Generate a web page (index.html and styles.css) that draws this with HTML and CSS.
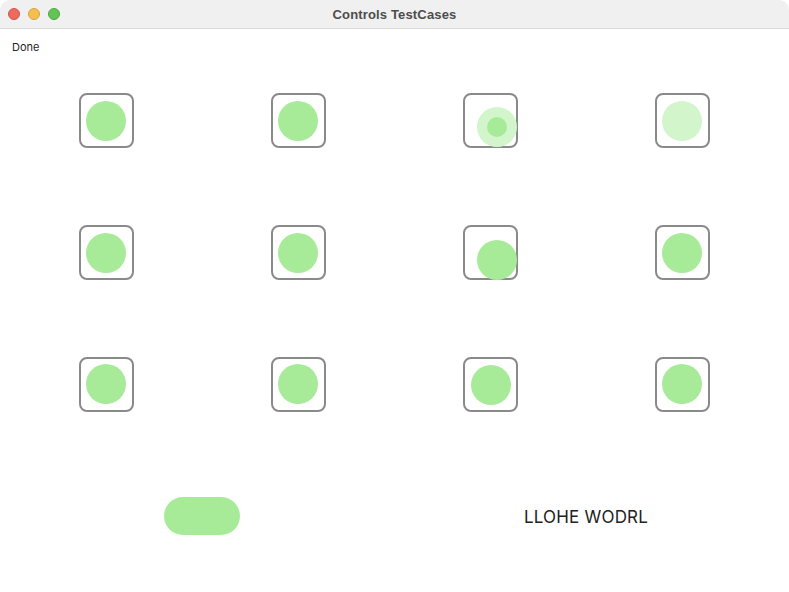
FILE: index.html
```html
<!DOCTYPE html>
<html>
<head>
<meta charset="utf-8">
<link rel="stylesheet" href="styles.css">
</head>
<body>
<div class="window">
  <div class="titlebar">
    <div class="lights">
      <span class="light red"></span>
      <span class="light yellow"></span>
      <span class="light green"></span>
    </div>
    <div class="title">Controls TestCases</div>
  </div>
  <div class="content">
    <div class="done">Done</div>
    <div class="grid">
      <div class="cell"><div class="box"><div class="dot"></div></div></div>
      <div class="cell"><div class="box"><div class="dot"></div></div></div>
      <div class="cell"><div class="box"><div class="dot faded shift-a"></div><div class="dot inner"></div></div></div>
      <div class="cell"><div class="box"><div class="dot faded"></div></div></div>

      <div class="cell"><div class="box"><div class="dot"></div></div></div>
      <div class="cell"><div class="box"><div class="dot"></div></div></div>
      <div class="cell"><div class="box"><div class="dot shift-b"></div></div></div>
      <div class="cell"><div class="box"><div class="dot"></div></div></div>

      <div class="cell"><div class="box"><div class="dot"></div></div></div>
      <div class="cell"><div class="box"><div class="dot"></div></div></div>
      <div class="cell"><div class="box"><div class="dot shift-c"></div></div></div>
      <div class="cell"><div class="box"><div class="dot"></div></div></div>

      <div class="cell wide"><div class="pill"></div></div>
      <div class="cell wide"><div class="label">LLOHE WODRL</div></div>
    </div>
  </div>
</div>
</body>
</html>
```
FILE: styles.css
```css
html, body {
  margin: 0;
  padding: 0;
  background: #ffffff;
}
body {
  width: 789px;
  height: 592px;
  overflow: hidden;
  font-family: "Inter", "Liberation Sans", sans-serif;
}
.window {
  width: 789px;
  height: 592px;
  background: #ffffff;
  border-radius: 10px 10px 0 0;
  overflow: hidden;
  display: flex;
  flex-direction: column;
}
.titlebar {
  height: 29px;
  flex: none;
  box-sizing: border-box;
  background: #f0f0f0;
  border-bottom: 1px solid #d9d9d9;
  position: relative;
  display: flex;
  align-items: center;
  justify-content: center;
}
.lights {
  position: absolute;
  left: 8px;
  top: 8px;
  display: flex;
  gap: 8px;
}
.light {
  width: 12px;
  height: 12px;
  border-radius: 50%;
  box-sizing: border-box;
}
.red { background: #ec6a5e; border: 0.5px solid #d5544a; }
.yellow { background: #f4bf4f; border: 0.5px solid #d6a243; }
.green { background: #61c554; border: 0.5px solid #4fa642; }
.title {
  font-family: "Liberation Sans", "Inter", sans-serif;
  font-weight: bold;
  font-size: 13px;
  color: #4c4c4c;
  letter-spacing: 0.15px;
}
.content {
  flex: 1;
  display: flex;
  flex-direction: column;
}
.done {
  height: 26px;
  box-sizing: border-box;
  padding: 12px 0 0 12px;
  font-size: 11px;
  line-height: 13px;
  color: #262626;
}
.grid {
  margin-left: 10px;
  width: 768px;
  display: grid;
  grid-template-columns: repeat(4, 192px);
  grid-template-rows: repeat(4, 131.7px);
}
.cell {
  display: flex;
  align-items: center;
  justify-content: center;
}
.cell.wide {
  grid-column: span 2;
}
.box {
  width: 55px;
  height: 55px;
  box-sizing: border-box;
  border: 2px solid #8a8a8a;
  border-radius: 8px;
  position: relative;
}
.dot {
  position: absolute;
  width: 40px;
  height: 40px;
  left: 5.5px;
  top: 5.5px;
  border-radius: 50%;
  background: #a7eb99;
}
.dot.faded {
  background: #d3f5cc;
}
.dot.shift-a {
  left: 12.5px;
  top: 11.5px;
}
.dot.inner {
  width: 20px;
  height: 20px;
  left: 22px;
  top: 21.5px;
  background: #a7eb99;
}
.dot.shift-b {
  left: 12px;
  top: 12.5px;
}
.dot.shift-c {
  left: 6.5px;
  top: 6.5px;
}
.pill {
  width: 76px;
  height: 38px;
  border-radius: 19px;
  background: #a7eb99;
}
.label {
  font-size: 17px;
  color: #222222;
  letter-spacing: 0.2px;
  margin-top: 2px;
}
```
